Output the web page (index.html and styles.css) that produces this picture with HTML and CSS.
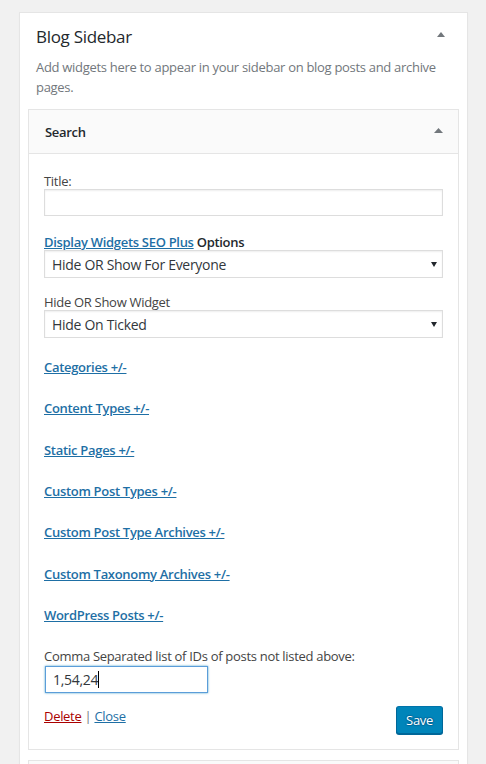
FILE: index.html
```html
<!DOCTYPE html>
<html lang="en">
<head>
<meta charset="utf-8">
<title>Widgets</title>
<link rel="stylesheet" href="styles.css">
</head>
<body>
<div class="sidebar">
  <div class="sidebar-head">
    <h2 class="sidebar-title">Blog Sidebar</h2>
    <svg class="arrow-up" width="8" height="5" viewBox="0 0 8 5"><polygon points="0,5 4,0 8,5" fill="#72777c"/></svg>
  </div>
  <p class="sidebar-desc">Add widgets here to appear in your sidebar on blog posts and archive<br>pages.</p>

  <div class="widget">
    <div class="widget-top">
      <span class="widget-title">Search</span>
      <svg class="arrow-up small" width="9" height="5" viewBox="0 0 9 5"><polygon points="0,5 4.5,0 9,5" fill="#72777c"/></svg>
    </div>
    <div class="widget-inside">
      <div class="field field-title">
        <label class="field-label">Title:</label>
        <div class="text-input"></div>
      </div>
      <div class="field field-opt1">
        <label class="field-label strong"><a class="plugin-link" href="#">Display Widgets SEO Plus</a> Options</label>
        <div class="select"><span>Hide OR Show For Everyone</span><svg width="6" height="5" viewBox="0 0 6 5"><polygon points="0,0 6,0 3,5" fill="#23282d"/></svg></div>
      </div>
      <div class="field field-opt2">
        <label class="field-label">Hide OR Show Widget</label>
        <div class="select"><span>Hide On Ticked</span><svg width="6" height="5" viewBox="0 0 6 5"><polygon points="0,0 6,0 3,5" fill="#23282d"/></svg></div>
      </div>
      <div class="toggles">
        <a class="toggle-link" href="#">Categories +/-</a>
        <a class="toggle-link" href="#">Content Types +/-</a>
        <a class="toggle-link" href="#">Static Pages +/-</a>
        <a class="toggle-link" href="#">Custom Post Types +/-</a>
        <a class="toggle-link" href="#">Custom Post Type Archives +/-</a>
        <a class="toggle-link" href="#">Custom Taxonomy Archives +/-</a>
        <a class="toggle-link" href="#">WordPress Posts +/-</a>
      </div>
      <div class="field field-ids">
        <label class="field-label">Comma Separated list of IDs of posts not listed above:</label>
        <div class="text-input focused"><span class="val">1,54,24</span><span class="caret"></span></div>
      </div>
      <div class="widget-actions">
        <div class="action-links"><a class="delete" href="#">Delete</a> | <a class="close" href="#">Close</a></div>
        <button class="save-btn" type="button">Save</button>
      </div>
    </div>
  </div>

  <div class="widget widget-next">
    <div class="widget-top"></div>
  </div>
</div>
</body>
</html>
```

FILE: styles.css
```css
html, body {
  margin: 0;
  padding: 0;
}
body {
  background: #f1f1f1;
  font-family: "Open Sans", "Noto Sans", sans-serif;
  font-size: 13px;
  letter-spacing: -0.3px;
  color: #444;
  height: 764px;
  overflow: hidden;
}
a {
  color: #1e6fa5;
}
.sidebar {
  margin: 12px 0 0 19px;
  width: 449px;
  box-sizing: border-box;
  border: 1px solid #e5e5e5;
  background: #fff;
  box-shadow: 0 1px 1px rgba(0,0,0,.04);
  padding-bottom: 40px;
}
.sidebar-head {
  display: flex;
  justify-content: space-between;
  align-items: flex-start;
  padding: 12px 22px 0 16px;
}
.sidebar-title {
  margin: 0;
  font-size: 17px;
  line-height: 24px;
  font-weight: 400;
  color: #23282d;
}
.arrow-up {
  margin-top: 7px;
  display: block;
}
.sidebar-desc {
  margin: 8px 16px 0;
  line-height: 20px;
  color: #72777c;
}
.widget {
  margin: 12px 8px 0;
  border: 1px solid #e5e5e5;
  background: #fff;
}
.widget-top {
  height: 43px;
  background: #fafafa;
  border-bottom: 1px solid #e5e5e5;
  display: flex;
  align-items: center;
  justify-content: space-between;
  padding: 0 15px 0 16px;
}
.widget-title {
  font-weight: 600;
  color: #23282d;
}
.arrow-up.small {
  margin-top: -2px;
}
.widget-inside {
  padding: 0 15px 15px;
}
.field-label {
  display: block;
  line-height: 16px;
}
.field-label.strong {
  font-weight: 600;
  color: #23282d;
}
.field-title { padding-top: 19px; }
.field-opt1 { margin-top: 18px; }
.field-opt2 { margin-top: 16px; }
.text-input {
  box-sizing: border-box;
  height: 27px;
  border: 1px solid #ddd;
  box-shadow: inset 0 1px 2px rgba(0,0,0,.07);
  background: #fff;
}
.select {
  box-sizing: border-box;
  height: 28px;
  border: 1px solid #ddd;
  box-shadow: inset 0 1px 2px rgba(0,0,0,.07);
  background: #fff;
  display: flex;
  align-items: center;
  justify-content: space-between;
  padding: 0 5px 0 7px;
  font-size: 14px;
  color: #32373c;
}
.toggles {
  display: flex;
  flex-direction: column;
  align-items: flex-start;
  gap: 21.33px;
  margin-top: 19px;
}
.toggle-link {
  line-height: 20px;
  font-weight: 600;
}
.field-ids { margin-top: 23px; }
.text-input.focused {
  width: 163px;
  margin-top: 2px;
  margin-left: 1px;
  border-color: #5b9dd9;
  box-shadow: 0 0 2px rgba(30,140,190,.8);
  display: flex;
  align-items: center;
  padding-left: 7px;
  font-size: 14px;
  color: #32373c;
}
.caret {
  width: 1px;
  height: 17px;
  background: #000;
}
.widget-actions {
  display: flex;
  justify-content: space-between;
  align-items: flex-start;
  margin-top: 13px;
}
.action-links {
  line-height: 20px;
  color: #72777c;
}
.delete { color: #a00; }
.save-btn {
  height: 28px;
  padding: 0 9px;
  font-family: inherit;
  font-size: 13px;
  letter-spacing: -0.3px;
  color: #fff;
  background: #0085ba;
  border: 1px solid;
  border-color: #0073aa #006799 #006799;
  border-radius: 3px;
  box-shadow: 0 1px 0 #006799;
  text-shadow: 0 -1px 1px #006799, 1px 0 1px #006799, 0 1px 1px #006799, -1px 0 1px #006799;
}
.widget-next {
  margin-top: 10px;
}
```
